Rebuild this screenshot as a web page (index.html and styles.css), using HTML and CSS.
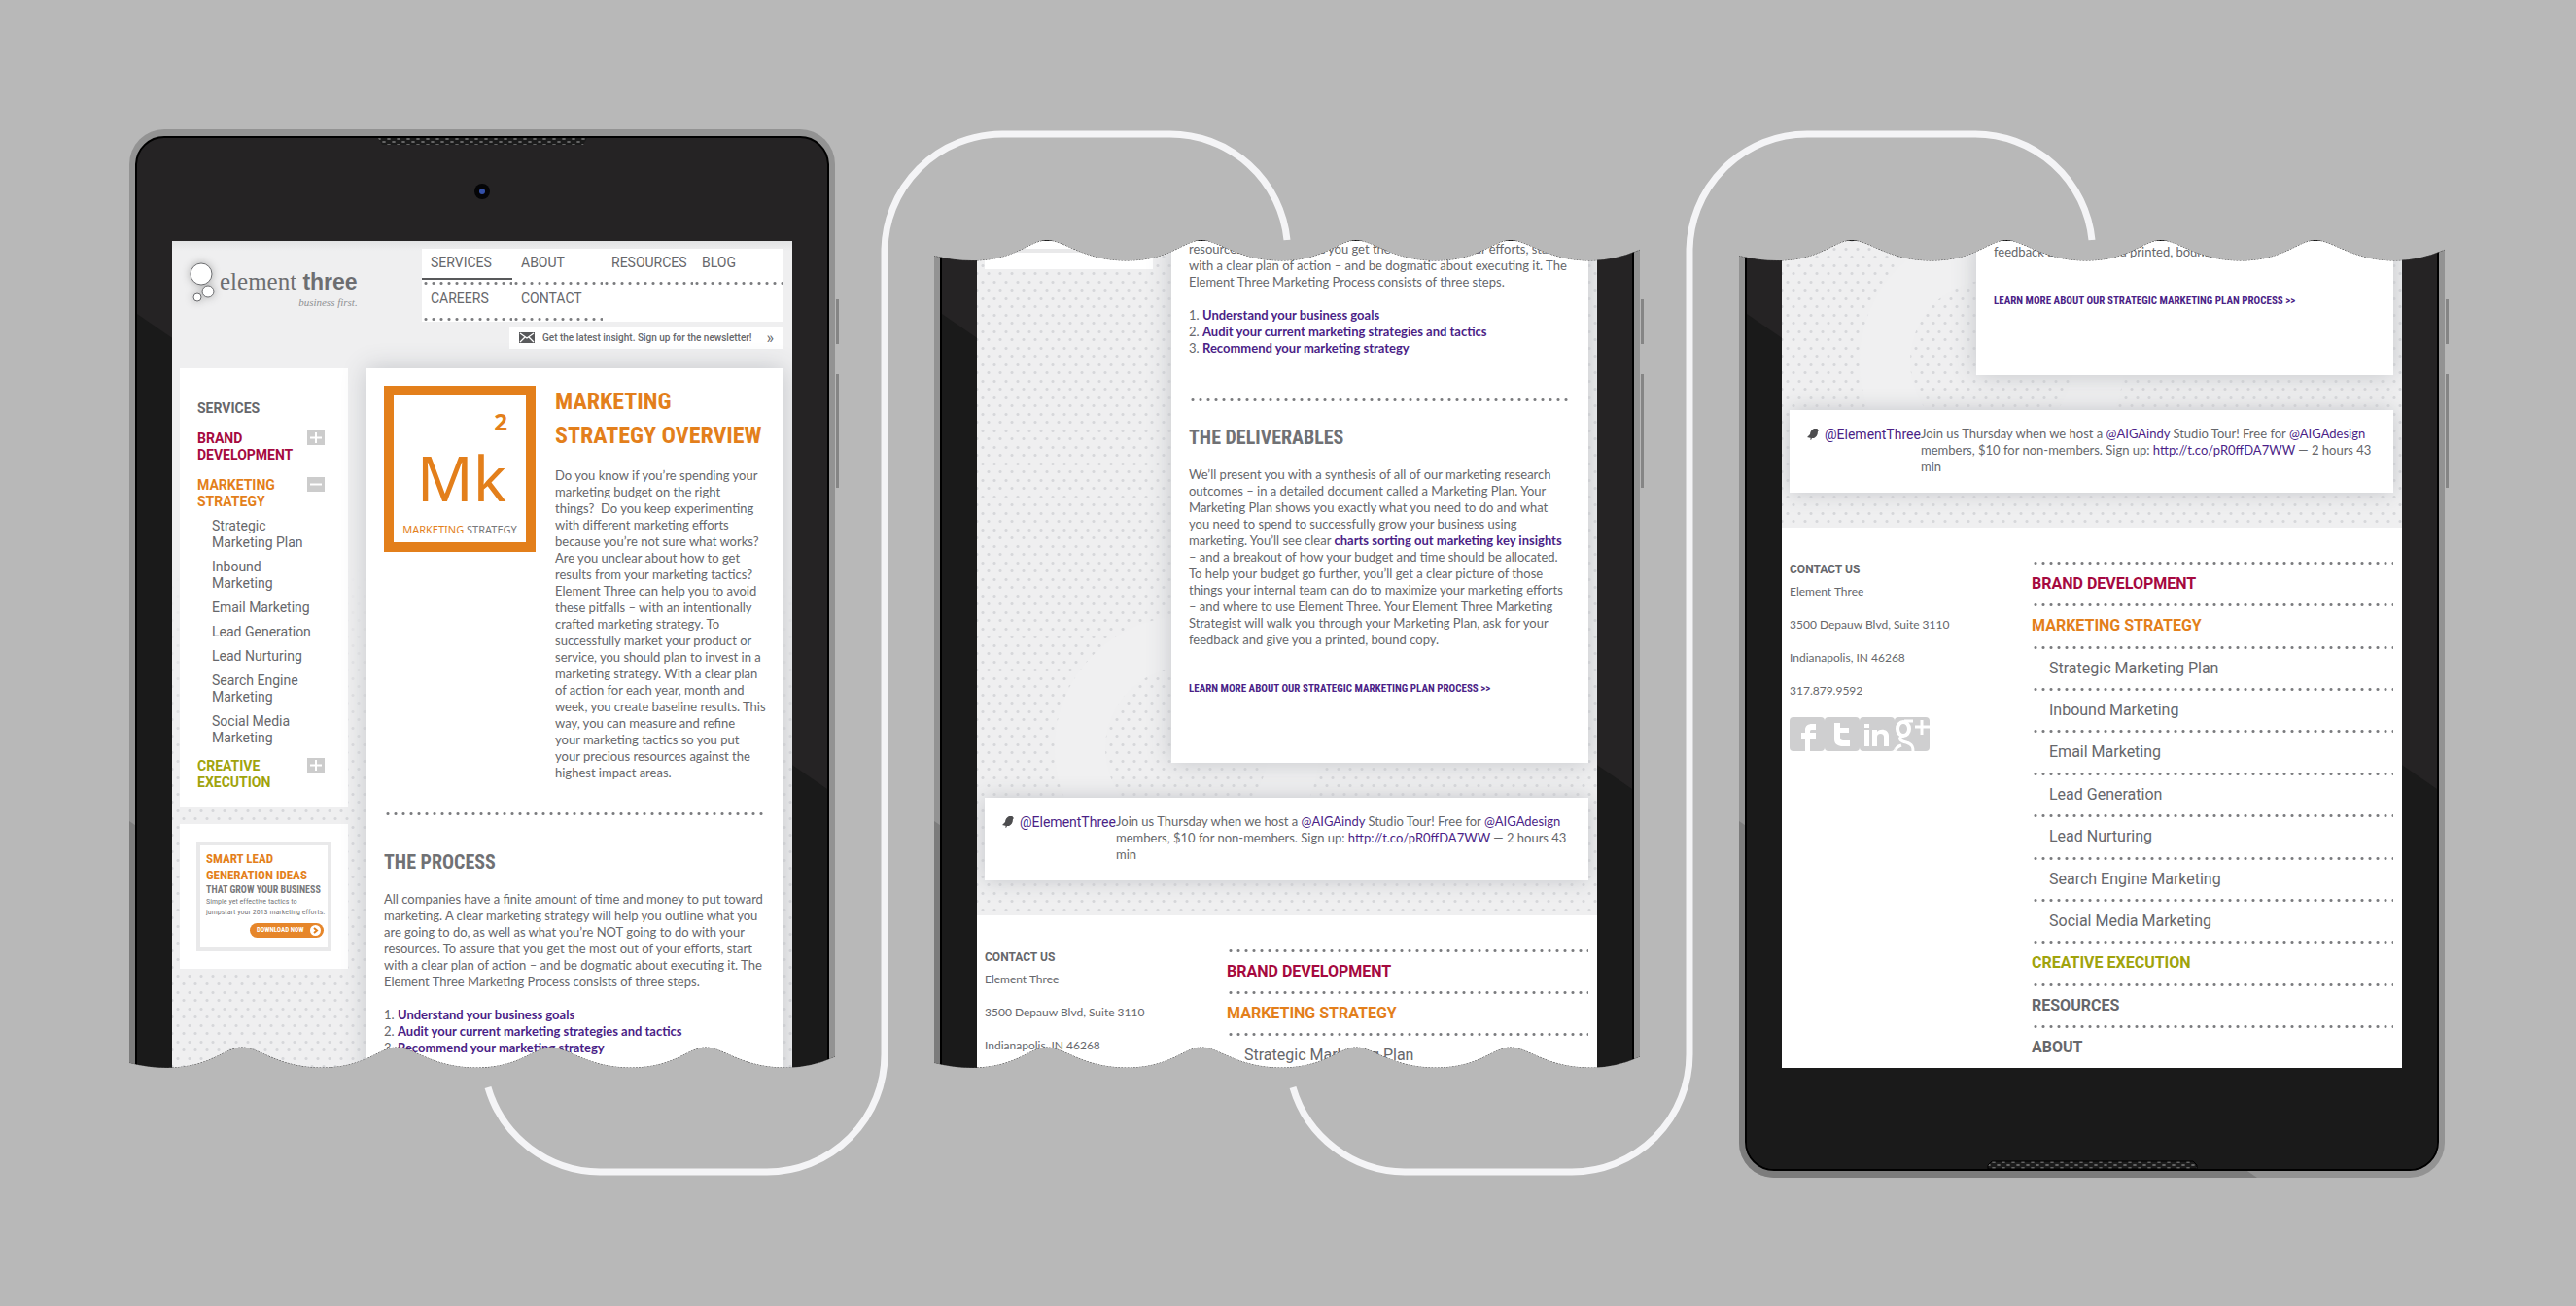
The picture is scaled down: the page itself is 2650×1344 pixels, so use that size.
FILE: index.html
```html
<!DOCTYPE html>
<html lang="en">
<head>
<meta charset="utf-8">
<title>Element Three – tablet views</title>
<link rel="stylesheet" href="styles.css">
</head>
<body>
<svg class="defs" aria-hidden="true">
  <defs>
    <pattern id="mesh" width="10" height="6" patternUnits="userSpaceOnUse">
      <rect width="10" height="6" fill="#1b1b1b"/>
      <ellipse cx="2" cy="1" rx="2" ry="1" fill="#6a6a6a"/>
      <ellipse cx="7" cy="4" rx="2" ry="1" fill="#6a6a6a"/>
    </pattern>
    <path id="wave" d="M-4 129 Q18 135 39 135 C84 135 98 114 116 114 S153 135 198 135 C243 135 257 114 275 114 S312 135 357 135 C402 135 416 114 434 114 S471 135 516 135 C561 135 575 114 593 114 S630 135 675 135 Q704 135 734 120"/>
    <path id="link-line" d="M369 986 A121 121 0 0 0 484 1073 H656 A121 121 0 0 0 777 952 V126 A121 121 0 0 1 898 5 H1070 A121 121 0 0 1 1191 114"/>
  </defs>
</svg>
<main class="stage">
  <section class="device" aria-label="Top of page">
    <svg class="frame" viewBox="0 0 732 1079" aria-hidden="true">
      <path d="M727 175h3v46h-3zM727 252h3v117h-3z" fill="#858585"/>
      <path d="M0 967V36A36 36 0 0 1 36 0H690A36 36 0 0 1 726 36V967z" fill="#939393"/>
      <path d="M0 712l180 124v131H0z" fill="#7c7c7c"/>
      <path d="M7 967V36A29 29 0 0 1 36 8H690A29 29 0 0 1 719 36V967z" fill="#252324" stroke="#000" stroke-width="2"/>
      <path d="M8 190L718 679V967H8z" fill="#1a1a1a"/>
      <path d="M256 9H471L467 16H260z" fill="url(#mesh)"/>
      <circle cx="363" cy="64" r="8" fill="#050507"/><circle cx="363" cy="64" r="3" fill="#3450a8"/>
    </svg>
    <div class="screen plain-top">
      <header class="site-head">
        <a class="logo" href="#" aria-label="element three – business first.">
          <svg class="bubbles" viewBox="0 0 28 46" aria-hidden="true"><g fill="#fff" stroke="#6d6e71" stroke-width="1"><circle cx="13" cy="13" r="11"/><circle cx="20" cy="31" r="6"/><circle cx="9" cy="37" r="4"/></g></svg>
          <span class="logo-text"><span class="logo-name">element <b>three</b></span><i>business first.</i></span>
        </a>
        <div class="head-right">
          <nav class="top-nav">
            <a class="current" href="#">SERVICES</a><a href="#">ABOUT</a><a href="#">RESOURCES</a><a href="#">BLOG</a><a href="#">CAREERS</a><a href="#">CONTACT</a>
          </nav>
          <a class="newsletter" href="#">
            <svg viewBox="0 0 16 11" aria-hidden="true"><path fill="#58595b" d="M0 0h16v11H0z"/><path d="M1 1l7 5 7-5M1 10l5-5M15 10l-5-5" fill="none" stroke="#fff" stroke-width="1.3"/></svg>
            <span>Get the latest insight. Sign up for the newsletter!</span><span class="more">»</span>
          </a>
        </div>
      </header>
      <div class="layout">
        <aside>
          <nav class="card side-nav">
            <a class="side-title" href="#">SERVICES</a>
            <div class="side-group"><a class="brand" href="#">BRAND<br>DEVELOPMENT</a><button type="button" aria-label="Expand brand development"><svg viewBox="0 0 18 15"><path d="M3 7.500h12M9 2v11"/></svg></button></div>
            <div class="side-group"><a class="market" href="#">MARKETING<br>STRATEGY</a><button type="button" aria-label="Collapse marketing strategy"><svg viewBox="0 0 18 15"><path d="M3 7.500h12"/></svg></button></div>
            <ul>
              <li><a href="#">Strategic<br>Marketing Plan</a></li>
              <li><a href="#">Inbound<br>Marketing</a></li>
              <li><a href="#">Email Marketing</a></li>
              <li><a href="#">Lead Generation</a></li>
              <li><a href="#">Lead Nurturing</a></li>
              <li><a href="#">Search Engine<br>Marketing</a></li>
              <li><a href="#">Social Media<br>Marketing</a></li>
            </ul>
            <div class="side-group last"><a class="creative" href="#">CREATIVE<br>EXECUTION</a><button type="button" aria-label="Expand creative execution"><svg viewBox="0 0 18 15"><path d="M3 7.500h12M9 2v11"/></svg></button></div>
          </nav>
          <div class="card promo">
            <div class="promo-box">
              <strong>SMART LEAD<br>GENERATION IDEAS</strong>
              <b>THAT GROW YOUR BUSINESS</b>
              <p>Simple yet effective tactics to<br>jumpstart your 2013 marketing efforts.</p>
              <button type="button">DOWNLOAD NOW <svg viewBox="0 0 11 11" aria-hidden="true"><circle cx="5.500" cy="5.500" r="5.500" fill="#fff"/><path d="M4 3l3 2.500L4 8" fill="none" stroke="#e37f1b" stroke-width="2"/></svg></button>
            </div>
          </div>
        </aside>
        <article class="card story opening">
          <div class="intro">
            <div class="tile"><span class="num">2</span><span class="sym">Mk</span><span class="cap"><em>MARKETING</em> STRATEGY</span></div>
            <div>
              <h1>MARKETING<br>STRATEGY OVERVIEW</h1>
              <p>Do you know if you’re spending your<br>marketing budget on the right<br>things?&nbsp; Do you keep experimenting<br>with different marketing efforts<br>because you’re not sure what works?<br>Are you unclear about how to get<br>results from your marketing tactics?<br>Element Three can help you to avoid<br>these pitfalls – with an intentionally<br>crafted marketing strategy. To<br>successfully market your product or<br>service, you should plan to invest in a<br>marketing strategy. With a clear plan<br>of action for each year, month and<br>week, you create baseline results. This<br>way, you can measure and refine<br>your marketing tactics so you put<br>your precious resources against the<br>highest impact areas.</p>
            </div>
          </div>
          <hr>
          <h2>THE PROCESS</h2>
          <p>All companies have a finite amount of time and money to put toward<br>marketing. A clear marketing strategy will help you outline what you<br>are going to do, as well as what you’re NOT going to do with your<br>resources. To assure that you get the most out of your efforts, start<br>with a clear plan of action – and be dogmatic about executing it. The<br>Element Three Marketing Process consists of three steps.</p>
          <ol>
            <li><a href="#">Understand your business goals</a></li>
            <li><a href="#">Audit your current marketing strategies and tactics</a></li>
            <li><a href="#">Recommend your marketing strategy</a></li>
          </ol>
        </article>
      </div>
    </div>
    <svg class="tear" viewBox="0 0 726 1079" aria-hidden="true"><g transform="translate(0 831)"><use href="#wave" fill="none" stroke="#444" stroke-dasharray="2 1"/><path fill="#b8b8b8" d="M-4 129 Q18 135 39 135 C84 135 98 114 116 114 S153 135 198 135 C243 135 257 114 275 114 S312 135 357 135 C402 135 416 114 434 114 S471 135 516 135 C561 135 575 114 593 114 S630 135 675 135 Q704 135 734 120 V142 H-4z"/></g></svg>
    <svg class="connector" viewBox="0 0 1200 1079" aria-hidden="true"><use href="#link-line"/></svg>
  </section>

  <section class="device" aria-label="Middle of page">
    <svg class="frame" viewBox="0 0 732 1079" aria-hidden="true">
      <path d="M727 175h3v46h-3zM727 252h3v117h-3z" fill="#858585"/>
      <path d="M0 114H726V967H0z" fill="#939393"/>
      <path d="M0 712l180 124v131H0z" fill="#7c7c7c"/>
      <path d="M7 114H719V967H7z" fill="#252324" stroke="#000" stroke-width="2"/>
      <path d="M8 190L718 679V967H8z" fill="#1a1a1a"/>
    </svg>
    <div class="screen">
      <div class="ring"></div>
      <div class="layout">
        <aside><div class="card promo-end"></div></aside>
        <article class="card story">
          <p>resources. To assure that you get the most out of your efforts, start<br>with a clear plan of action – and be dogmatic about executing it. The<br>Element Three Marketing Process consists of three steps.</p>
          <ol>
            <li><a href="#">Understand your business goals</a></li>
            <li><a href="#">Audit your current marketing strategies and tactics</a></li>
            <li><a href="#">Recommend your marketing strategy</a></li>
          </ol>
          <hr>
          <h2>THE DELIVERABLES</h2>
          <p>We’ll present you with a synthesis of all of our marketing research<br>outcomes – in a detailed document called a Marketing Plan. Your<br>Marketing Plan shows you exactly what you need to do and what<br>you need to spend to successfully grow your business using<br>marketing. You’ll see clear <a href="#"><b>charts sorting out marketing key insights</b></a><br>– and a breakout of how your budget and time should be allocated.<br>To help your budget go further, you’ll get a clear picture of those<br>things your internal team can do to maximize your marketing efforts<br>– and where to use Element Three. Your Element Three Marketing<br>Strategist will walk you through your Marketing Plan, ask for your<br>feedback and give you a printed, bound copy.</p>
          <a class="learn" href="#">LEARN MORE ABOUT OUR STRATEGIC MARKETING PLAN PROCESS &gt;&gt;</a>
        </article>
      </div>
      <div class="card tweet">
        <svg viewBox="0 0 12 12" aria-hidden="true"><path fill="#4d4d4f" d="M7 0c2-1 4 0 4 1l1 1-1 1c0 4-2 6-4 7H5l-1 2-1-1 1-1-4-1 3-3c0-3 2-5 4-6z"/></svg>
        <a class="handle" href="#">@ElementThree</a>
        <p>Join us Thursday when we host a <a href="#">@AIGAindy</a> Studio Tour! Free for <a href="#">@AIGAdesign</a><br>members, $10 for non-members. Sign up: <a href="#">http://t.co/pR0ffDA7WW</a> — 2 hours 43<br>min</p>
      </div>
      <footer>
        <address><b>CONTACT US</b><span>Element Three</span><span>3500 Depauw Blvd, Suite 3110</span><span>Indianapolis, IN 46268</span></address>
        <ul class="foot-nav">
          <li><a class="brand" href="#">BRAND DEVELOPMENT</a></li>
          <li><a class="market" href="#">MARKETING STRATEGY</a></li>
          <li class="sub"><a href="#">Strategic Marketing Plan</a></li>
        </ul>
      </footer>
    </div>
    <svg class="tear" viewBox="0 0 726 1079" aria-hidden="true">
      <use href="#wave" fill="none" stroke="#444" stroke-dasharray="2 1"/>
      <path fill="#b8b8b8" d="M-4 129 Q18 135 39 135 C84 135 98 114 116 114 S153 135 198 135 C243 135 257 114 275 114 S312 135 357 135 C402 135 416 114 434 114 S471 135 516 135 C561 135 575 114 593 114 S630 135 675 135 Q704 135 734 120 V110 H-4z"/>
      <g transform="translate(0 831)"><use href="#wave" fill="none" stroke="#444" stroke-dasharray="2 1"/><path fill="#b8b8b8" d="M-4 129 Q18 135 39 135 C84 135 98 114 116 114 S153 135 198 135 C243 135 257 114 275 114 S312 135 357 135 C402 135 416 114 434 114 S471 135 516 135 C561 135 575 114 593 114 S630 135 675 135 Q704 135 734 120 V142 H-4z"/></g>
    </svg>
    <svg class="connector" viewBox="0 0 1200 1079" aria-hidden="true"><use href="#link-line"/></svg>
  </section>

  <section class="device" aria-label="End of page">
    <svg class="frame" viewBox="0 0 732 1079" aria-hidden="true">
      <path d="M727 175h3v46h-3zM727 252h3v117h-3z" fill="#858585"/>
      <path d="M0 114H726V1043A36 36 0 0 1 690 1079H36A36 36 0 0 1 0 1043z" fill="#939393"/>
      <path d="M0 712L533 1079H36A36 36 0 0 1 0 1043z" fill="#7c7c7c"/>
      <path d="M7 114H719V1042A29 29 0 0 1 690 1071H36A29 29 0 0 1 7 1042z" fill="#252324" stroke="#000" stroke-width="2"/>
      <path d="M8 190L718 679V1042A28 28 0 0 1 690 1070H36A28 28 0 0 1 8 1042z" fill="#1a1a1a"/>
      <path d="M256 1070V1066L260 1062H467L471 1066V1070z" fill="url(#mesh)" stroke="#000"/>
    </svg>
    <div class="screen">
      <div class="ring high"></div>
      <div class="layout">
        <aside></aside>
        <article class="card story tail">
          <p>feedback and give you a printed, bound copy.</p>
          <a class="learn" href="#">LEARN MORE ABOUT OUR STRATEGIC MARKETING PLAN PROCESS &gt;&gt;</a>
        </article>
      </div>
      <div class="card tweet">
        <svg viewBox="0 0 12 12" aria-hidden="true"><path fill="#4d4d4f" d="M7 0c2-1 4 0 4 1l1 1-1 1c0 4-2 6-4 7H5l-1 2-1-1 1-1-4-1 3-3c0-3 2-5 4-6z"/></svg>
        <a class="handle" href="#">@ElementThree</a>
        <p>Join us Thursday when we host a <a href="#">@AIGAindy</a> Studio Tour! Free for <a href="#">@AIGAdesign</a><br>members, $10 for non-members. Sign up: <a href="#">http://t.co/pR0ffDA7WW</a> — 2 hours 43<br>min</p>
      </div>
      <footer>
        <address><b>CONTACT US</b><span>Element Three</span><span>3500 Depauw Blvd, Suite 3110</span><span>Indianapolis, IN 46268</span><span>317.879.9592</span>
          <div class="social">
            <a href="#" aria-label="Facebook"><svg viewBox="0 0 36 35"><path fill="#fff" d="M16 35V22h-4v-6h4v-3c0-4 3-6 7-6h4v6h-3c-2 0-3 0-3 2v1h6v6h-6v13z"/></svg></a>
            <a href="#" aria-label="Twitter"><svg viewBox="0 0 36 35"><path fill="#fff" d="M10 6h6v5h9v5h-9v4c0 3 1 4 4 4h6v6h-7c-6 0-9-3-9-7z"/></svg></a>
            <a href="#" aria-label="LinkedIn"><svg viewBox="0 0 36 35"><path fill="#fff" d="M5 13h5v17H5zM5 7h5v4H5zM13 13h5v2c3-4 12-3 12 4v11h-5V20c0-4-7-4-7 0v10h-5z"/></svg></a>
            <a href="#" aria-label="Google Plus"><svg viewBox="0 0 36 35"><g fill="none" stroke="#fff"><ellipse cx="9" cy="12" rx="6" ry="7" stroke-width="4"/><path d="M10 4h9M9 19c-7 3-2 6 3 7 7 2 7 6 7 9M1 35c0-4 3-5 6-6" stroke-width="3"/><path d="M28 3v15M21 10h15" stroke-width="3"/></g></svg></a>
          </div>
        </address>
        <ul class="foot-nav full">
          <li><a class="brand" href="#">BRAND DEVELOPMENT</a></li>
          <li><a class="market" href="#">MARKETING STRATEGY</a></li>
          <li class="sub"><a href="#">Strategic Marketing Plan</a></li>
          <li class="sub"><a href="#">Inbound Marketing</a></li>
          <li class="sub"><a href="#">Email Marketing</a></li>
          <li class="sub"><a href="#">Lead Generation</a></li>
          <li class="sub"><a href="#">Lead Nurturing</a></li>
          <li class="sub"><a href="#">Search Engine Marketing</a></li>
          <li class="sub"><a href="#">Social Media Marketing</a></li>
          <li><a class="creative" href="#">CREATIVE EXECUTION</a></li>
          <li><a href="#">RESOURCES</a></li>
          <li><a href="#">ABOUT</a></li>
        </ul>
      </footer>
    </div>
    <svg class="tear" viewBox="0 0 726 1079" aria-hidden="true">
      <use href="#wave" fill="none" stroke="#444" stroke-dasharray="2 1"/>
      <path fill="#b8b8b8" d="M-4 129 Q18 135 39 135 C84 135 98 114 116 114 S153 135 198 135 C243 135 257 114 275 114 S312 135 357 135 C402 135 416 114 434 114 S471 135 516 135 C561 135 575 114 593 114 S630 135 675 135 Q704 135 734 120 V110 H-4z"/>
    </svg>
  </section>
</main>
</body>
</html>
```
FILE: styles.css
```css
* { box-sizing: border-box; }
body {
  margin: 0;
  min-height: 100vh;
  background: #b8b8b8;
  color: #66676b;
  font: 13px/17px Lato, "Liberation Sans", sans-serif;
  white-space: nowrap;
}
a { color: inherit; text-decoration: none; }
p, h1, h2, ul, ol { margin: 0; padding: 0; }
ul { list-style: none; }
button { font: inherit; border: 0; padding: 0; cursor: pointer; }
.defs { position: absolute; width: 0; height: 0; }

.stage { display: flex; justify-content: center; gap: 102px; padding: 133px 2px 133px 0; }
.device { position: relative; flex: none; width: 726px; height: 1079px; padding: 115px 44px 0; }
.frame, .tear, .connector { position: absolute; top: 0; left: 0; height: 1079px; pointer-events: none; }
.frame { width: 732px; }
.tear { width: 726px; overflow: hidden; }
.connector { width: 1200px; fill: none; stroke: #f4f4f6; stroke-width: 7px; z-index: 3; }

.screen {
  position: relative;
  height: 851px;
  overflow: hidden;
  background-color: #efeff0;
  background-image:
    radial-gradient(circle, #d6d7da 1px, transparent 2px),
    radial-gradient(circle, #d6d7da 1px, transparent 2px);
  background-size: 12px 17px;
  background-position: 0 0, 6px 8px;
}
.plain-top::before {
  content: "";
  position: absolute;
  inset: 0 0 300px;
  background: linear-gradient(#e2e3e4, #efeff0 10px, #efeff0 60%, transparent);
}
.ring {
  position: absolute;
  top: 386px;
  left: 80px;
  width: 272px;
  height: 272px;
  border: 52px solid #f0f0f1;
  border-radius: 50%;
}
.ring.high { top: -12px; }
.card { position: relative; background: #fff; }

/* header */
.site-head { position: relative; display: flex; justify-content: space-between; height: 131px; padding: 8px 9px 0 17px; }
.logo { display: flex; gap: 4px; padding-top: 13px; }
.bubbles { width: 28px; height: 46px; filter: drop-shadow(0 0 4px #aaa); }
.logo-text { display: flex; flex-direction: column; align-items: flex-end; padding-top: 8px; }
.logo-name { font: 25px/26px "Liberation Serif", serif; color: #6d6e71; }
.logo-name b { font: bold 23px/26px "Liberation Sans", sans-serif; }
.logo-text i { font: italic 11px/16px "Liberation Serif", serif; color: #909194; }
.head-right { display: flex; flex-direction: column; align-items: flex-end; gap: 5px; }
.top-nav { display: grid; grid-template-columns: repeat(4, 93px); grid-auto-rows: 37px; height: 75px; background: #fff; font: 14px/28px Roboto, sans-serif; }
.top-nav a { padding-left: 9px; position: relative; }
.top-nav a::after, hr, .foot-nav li::before {
  content: "";
  display: block;
  height: 3px;
  background: radial-gradient(circle, #7a7b7e 1px, transparent 2px) 0 0 / 8px 3px repeat-x;
}
.top-nav a::after { position: absolute; inset: auto 0 0; }
.top-nav .current::before { content: ""; position: absolute; inset: 30px 0 auto; height: 2px; background: #58595b; }
.newsletter { display: flex; align-items: center; width: 282px; height: 23px; padding: 0 10px; background: #fff; font: 500 10px/23px Roboto, sans-serif; }
.newsletter svg { width: 16px; height: 11px; margin-right: 8px; }
.more { margin-left: auto; font-size: 16px; line-height: 20px; font-weight: 400; }

/* columns */
.layout { position: relative; display: grid; grid-template-columns: 173px 1fr; gap: 19px; padding: 0 9px 0 8px; }
.brand { color: #a5093f; }
.market { color: #e37f1b; }
.creative { color: #a0a30c; }
.side-nav { height: 451px; padding: 33px 18px 0; font: 14px/17px Roboto, sans-serif; }
.side-title { display: block; font-weight: 700; margin-bottom: 14px; }
.side-group { display: flex; justify-content: space-between; align-items: flex-start; font-weight: 700; margin-bottom: 14px; padding-right: 6px; }
.side-group button { width: 18px; height: 15px; background: #ccc; }
.side-group svg { display: block; stroke: #fff; stroke-width: 2px; }
.side-nav ul { padding-left: 15px; margin: -6px 0 12px; }
.side-nav li { margin-bottom: 8px; }
.promo { margin-top: 18px; padding: 18px 17px; height: 149px; }
.promo-box { display: flex; flex-direction: column; height: 113px; border: 4px solid #e9e9ea; padding: 5px 4px 0 6px; color: #77787b; }
.promo-box strong, .promo-box b, .promo-box p, .promo-box button { font-family: "Roboto Condensed", "Liberation Sans Narrow", Roboto, sans-serif; }
.promo-box strong { font-size: 13px; line-height: 17px; color: #e37f1b; }
.promo-box b { font-size: 10px; line-height: 13px; }
.promo-box p { font-size: 8px; line-height: 11px; }
.promo-box button { display: flex; align-items: center; justify-content: space-between; align-self: flex-end; width: 76px; height: 15px; margin-top: 6px; padding: 0 3px 0 7px; border-radius: 8px; background: #e6862a; color: #fff; font-size: 7px; line-height: 15px; font-weight: 700; }
.promo-box button svg { width: 11px; height: 11px; flex: none; }
.promo-end { height: 29px; }
.promo-end::before { content: ""; position: absolute; inset: 8px 17px auto; height: 4px; background: #e9e9ea; }

/* article */
.story { padding: 0 18px 68px; box-shadow: 0 0 24px #c3c5c9; }
.opening { padding-top: 18px; height: 760px; }
.tail { padding-top: 3px; }
.intro { display: grid; grid-template-columns: 156px 1fr; gap: 20px; align-items: start; }
.tile { position: relative; display: flex; flex-direction: column; height: 171px; border: 10px solid #e37f1b; color: #e37f1b; font-family: "Noto Sans", sans-serif; }
.num { font-weight: 700; font-size: 24px; line-height: 28px; margin: 13px 19px 0 0; text-align: right; }
.sym { font-size: 64px; line-height: 80px; text-align: right; padding-right: 20px; margin-top: 4px; }
.cap { font: 11px/14px "Noto Sans", sans-serif; text-align: center; color: #77787b; margin-top: 6px; }
.cap em { font-style: normal; color: #e37f1b; }
h1, h2, .learn { font-family: "Roboto Condensed", "Liberation Sans Narrow", Roboto, sans-serif; font-weight: 700; }
h1 { font-size: 24px; line-height: 35px; color: #e37f1b; margin: -1px 0 15px; }
h2 { font-size: 20px; line-height: 34px; margin: 20px 0 13px; color: #707174; }
hr { border: 0; margin: 43px 0 0; }
.intro + hr { margin-top: 32px; }
.intro ~ h2 { margin-top: 31px; }
ol { margin-top: 17px; list-style: none; counter-reset: step; }
ol li { counter-increment: step; }
ol li::before { content: counter(step) ". "; }
ol a { font-weight: 700; }
ol a, .story p a, .learn, .tweet a { color: #4b1f87; }
.learn { display: block; font-size: 11px; line-height: 17px; margin-top: 33px; }

.tweet { display: flex; margin: 36px 9px 36px 8px; padding: 16px 18px 18px; box-shadow: 0 0 20px #c3c5c9; }
.tweet svg { width: 12px; height: 12px; margin: 3px 6px 0 0; }
.handle { width: 99px; font: 14px/19px Roboto, sans-serif; }

footer { position: relative; display: grid; grid-template-columns: 249px 1fr; min-height: 600px; background: #fff; padding: 35px 9px 0 8px; align-items: start; }
address { display: flex; flex-direction: column; align-items: flex-start; gap: 17px; font-style: normal; font-size: 12px; }
address b { font: bold 12px/17px Roboto, sans-serif; margin-bottom: -12px; }
.social { display: flex; margin-top: 2px; }
.social a { width: 36px; height: 35px; background: #cfcfd0; border-radius: 4px; overflow: hidden; }
.social svg { display: block; }
.foot-nav { font: bold 16px/40px Roboto, sans-serif; }
.foot-nav.full { display: flex; flex-direction: column; justify-content: space-between; height: 520px; }
.foot-nav .sub { font-weight: 400; }
.foot-nav .sub a { padding-left: 18px; }
```
